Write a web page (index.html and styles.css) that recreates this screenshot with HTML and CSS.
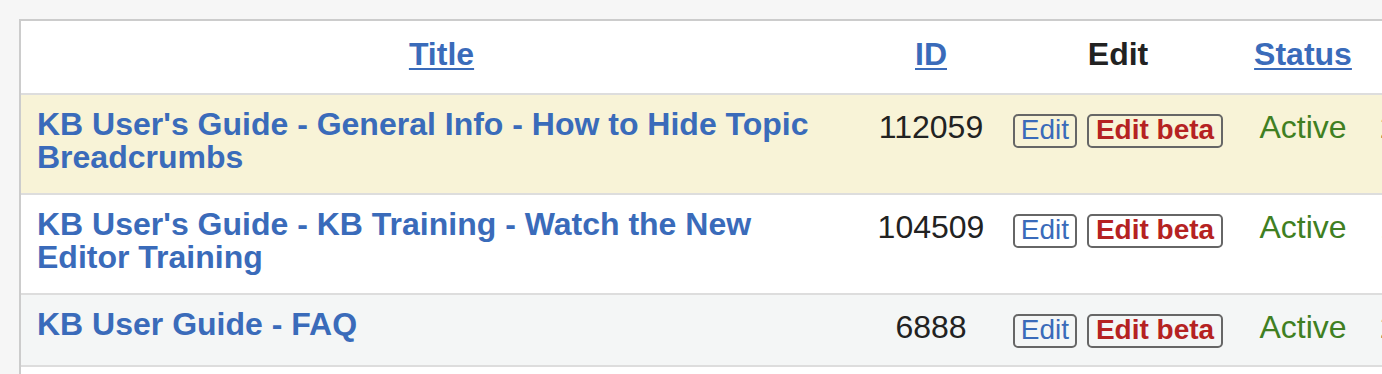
FILE: index.html
```html
<!DOCTYPE html>
<html lang="en">
<head>
<meta charset="utf-8">
<title>KB Topics</title>
<link rel="stylesheet" href="styles.css">
</head>
<body>
<table class="topics">
  <colgroup>
    <col class="c-title">
    <col class="c-id">
    <col class="c-edit">
    <col class="c-status">
    <col class="c-date">
  </colgroup>
  <thead>
    <tr class="head-row">
      <th><a href="#">Title</a></th>
      <th><a href="#">ID</a></th>
      <th class="plain">Edit</th>
      <th><a href="#">Status</a></th>
      <th class="head-date"><a href="#">Updated</a></th>
    </tr>
  </thead>
  <tbody>
    <tr class="row tall hl">
      <td class="title"><a href="#">KB User's Guide - General Info - How to Hide Topic Breadcrumbs</a></td>
      <td class="num">112059</td>
      <td class="edit"><a class="btn" href="#">Edit</a> <a class="btn beta" href="#">Edit beta</a></td>
      <td class="status">Active</td>
      <td class="date">2/14/2023</td>
    </tr>
    <tr class="row tall">
      <td class="title"><a href="#">KB User's Guide - KB Training - Watch the New Editor Training</a></td>
      <td class="num">104509</td>
      <td class="edit"><a class="btn" href="#">Edit</a> <a class="btn beta" href="#">Edit beta</a></td>
      <td class="status">Active</td>
      <td class="date">11/02/2022</td>
    </tr>
    <tr class="row short alt">
      <td class="title"><a href="#">KB User Guide - FAQ</a></td>
      <td class="num">6888</td>
      <td class="edit"><a class="btn" href="#">Edit</a> <a class="btn beta" href="#">Edit beta</a></td>
      <td class="status">Active</td>
      <td class="date">2/01/2022</td>
    </tr>
    <tr class="row short">
      <td class="title"><a href="#">KB User's Guide - Getting Started</a></td>
      <td class="num">5120</td>
      <td class="edit"><a class="btn" href="#">Edit</a> <a class="btn beta" href="#">Edit beta</a></td>
      <td class="status">Active</td>
      <td class="date">1/18/2022</td>
    </tr>
  </tbody>
</table>
</body>
</html>
```

FILE: styles.css
```css
html, body {
  margin: 0;
  padding: 0;
  background: #f6f6f6;
  overflow: hidden;
}

body {
  padding: 19px 0 0 19px;
  font-family: "Liberation Sans", Arial, Helvetica, sans-serif;
  font-size: 32px;
  line-height: 33px;
  color: #222222;
}

.topics {
  border-collapse: separate;
  border-spacing: 0;
  table-layout: fixed;
  width: 1671px;
  background: #ffffff;
  border-top: 2px solid #cccccc;
  border-left: 2px solid #cccccc;
}

.c-title { width: 841px; }
.c-id { width: 138px; }
.c-edit { width: 236px; }
.c-status { width: 134px; }
.c-date { width: 320px; }

a {
  color: #3a6bba;
  text-decoration: none;
}

.head-row { height: 74px; }

.topics th {
  padding: 17px 0 0;
  vertical-align: top;
  text-align: center;
  font-weight: bold;
  border-bottom: 2px solid #dddddd;
  white-space: nowrap;
}

.topics th.head-date {
  text-align: left;
  padding-left: 90px;
}

.topics th a {
  text-decoration: underline;
  text-decoration-thickness: 2px;
  text-underline-offset: 3px;
}

.topics th.plain { color: #222222; }

.row.tall { height: 100px; }
.row.short { height: 72px; }
.row.hl { background: #f8f3d7; }
.row.alt { background: #f4f6f6; }

.topics td {
  vertical-align: top;
  border-bottom: 2px solid #dddddd;
  padding: 16px 0 0;
  text-align: center;
  white-space: nowrap;
}

.topics td.title {
  text-align: left;
  padding: 13px 30px 0 16px;
  font-weight: bold;
  white-space: normal;
}

.num { color: #222222; }

.topics td.edit {
  font-size: 28px;
  padding-top: 18px;
}

.btn {
  display: inline-block;
  border: 2px solid #666666;
  border-radius: 5px;
  padding: 0 6px 3px;
  line-height: 27px;
  font-size: 28px;
  color: #3a6bba;
}

.btn.beta {
  color: #b52222;
  font-weight: bold;
  margin-left: 2px;
  padding: 0 7px 3px;
}

.status { color: #3f7f22; }

.topics td.date {
  text-align: left;
  padding-left: 10px;
  color: #222222;
}
```
